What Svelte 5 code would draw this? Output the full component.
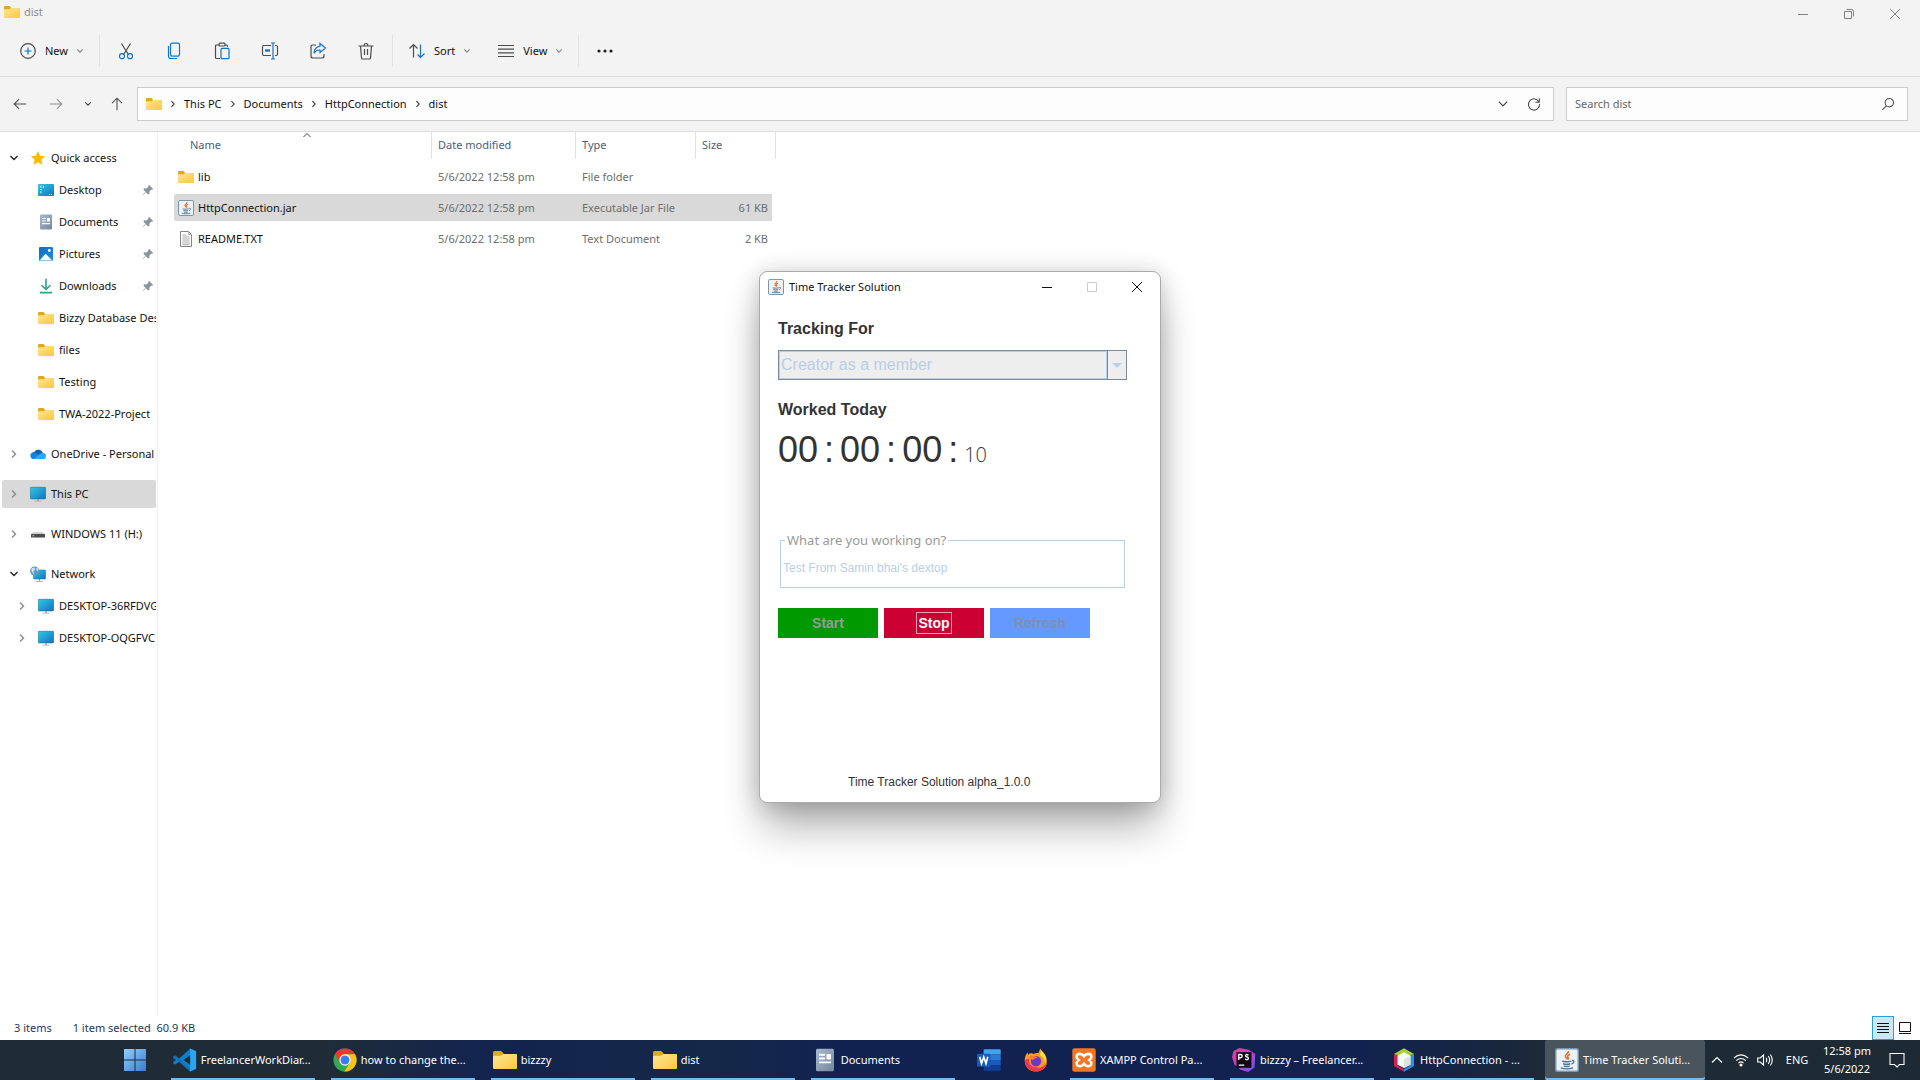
<script>
  const pinned = [
    { icon: 'desktop', label: 'Desktop', pin: true },
    { icon: 'document', label: 'Documents', pin: true },
    { icon: 'pictures', label: 'Pictures', pin: true },
    { icon: 'downloads', label: 'Downloads', pin: true },
    { icon: 'folder', label: 'Bizzy Database Des' },
    { icon: 'folder', label: 'files' },
    { icon: 'folder', label: 'Testing' },
    { icon: 'folder', label: 'TWA-2022-Project' }
  ];
  const groups = [
    { icon: 'star', label: 'Quick access', open: true, children: pinned },
    { icon: 'cloud', label: 'OneDrive - Personal' },
    { icon: 'pc', label: 'This PC', selected: true },
    { icon: 'drive', label: 'WINDOWS 11 (H:)' },
    {
      icon: 'network', label: 'Network', open: true,
      children: [
        { icon: 'pc', label: 'DESKTOP-36RFDVG', expandable: true },
        { icon: 'pc', label: 'DESKTOP-OQGFVC', expandable: true }
      ]
    }
  ];
  const files = [
    { icon: 'folder', name: 'lib', date: '5/6/2022 12:58 pm', type: 'File folder', size: '' },
    { icon: 'java', name: 'HttpConnection.jar', date: '5/6/2022 12:58 pm', type: 'Executable Jar File', size: '61 KB', selected: true },
    { icon: 'text', name: 'README.TXT', date: '5/6/2022 12:58 pm', type: 'Text Document', size: '2 KB' }
  ];
  const tools = ['Cut', 'Copy', 'Paste', 'Rename', 'Share', 'Delete'];
  const crumbs = ['This PC', 'Documents', 'HttpConnection', 'dist'];
  const tasksLeft = [
    { icon: 'vscode', label: 'FreelancerWorkDiar...' },
    { icon: 'chrome', label: 'how to change the...' },
    { icon: 'folder', label: 'bizzzy' },
    { icon: 'folder', label: 'dist' },
    { icon: 'document', label: 'Documents' }
  ];
  const tasksRight = [
    { icon: 'xampp', label: 'XAMPP Control Pa...' },
    { icon: 'storm', label: 'bizzzy – Freelancer...' },
    { icon: 'netbeans', label: 'HttpConnection - ...' }
  ];
</script>

{#snippet chevron(dir, cls = '')}
  <svg class="chev {dir} {cls}" viewBox="0 0 10 10" aria-hidden="true"><path d="M1.5 3 5 6.5 8.5 3" /></svg>
{/snippet}

{#snippet icon(name, size = 16)}
  <svg class="ico" width={size} height={size} viewBox="0 0 16 16" aria-hidden="true">
    {#if name === 'folder'}
      <path d="M0 3q0-1 1-1h4.5l1.8 2H15q1 0 1 1v2H0z" fill="#dfa91b" />
      <path d="M0 6q0-.8.8-.8h4.4L7 4h8.2q.8 0 .8.8v8.4q0 .8-.8.8H.8q-.8 0-.8-.8z" fill="url(#gFolder)" />
    {:else if name === 'star'}
      <path d="m8 1 2.1 4.7 5 .6-3.7 3.4 1 5L8 12.2l-4.4 2.5 1-5L.9 6.3l5-.6z" fill="#ffb900" />
    {:else if name === 'desktop'}
      <rect y="2" width="16" height="12" rx="1" fill="url(#gScreen)" />
      <path d="M2.2 4.2h1.2v1.2H2.2zm0 2.7h1.2v1.2H2.2zm0 2.7h1.2v1.2H2.2zM4.8 4.2H6v1.2H4.8z" fill="#fff" />
      <path d="M11 12.5h1m1 0h1" stroke="#fff" />
    {:else if name === 'document'}
      <rect x="2" y=".5" width="12" height="15" rx="1" fill="url(#gDoc)" />
      <path d="M4 4.5h4M4 7h4M4 9.6h8" stroke="#fff" stroke-width="1.2" />
      <path d="M9 4h3v3.6H9z" fill="#fff" />
    {:else if name === 'pictures'}
      <rect x="1" y="1" width="14" height="14" rx="1.2" fill="url(#gPic)" />
      <path d="m1.6 14.4 5.2-6q.8-.9 1.6 0l5.9 6z" fill="#fff" />
      <circle cx="11.3" cy="4.5" r="1.4" fill="#fff" />
    {:else if name === 'downloads'}
      <path d="M8 .8v10.4M3.6 7.2 8 11.5l4.4-4.3M2 14.6h12" fill="none" stroke="#25a588" stroke-width="1.6" />
    {:else if name === 'cloud'}
      <path d="M4.8 5.4a4.5 4.5 0 0 1 7.7 1.2L15 8.5l-8 4-5-5.3z" fill="#0b5fb4" />
      <path d="M3.4 13a3.4 3.4 0 0 1-.3-6.7c1.6-.4 2.8.2 4 1.1l7 4.6-1.2 1z" fill="#1182d8" />
      <path d="M3.4 13 10 8q1.4-1.4 3.1-1a3 3 0 0 1-.3 6z" fill="#2aa8ef" />
    {:else if name === 'pc'}
      <path d="M7.4 12.5h1.2V15H7.4zM4.8 14.8h6.4v.8H4.8z" fill="#9aa3a8" />
      <rect x=".3" y="1.3" width="15.4" height="11.6" rx=".8" fill="url(#gScreen)" stroke="#187197" stroke-width=".6" />
    {:else if name === 'drive'}
      <path d="M3 6h10l2 2.5H1z" fill="#d0d0d0" />
      <rect x="1" y="8" width="14" height="3.6" rx=".5" fill="#4b4b4b" />
      <path d="M2.6 9.8h1.6" stroke="#ddd" />
    {:else if name === 'network'}
      <path d="M8.8 13h1.2v2H8.8zM6 15h7v.7H6z" fill="#9aa3a8" />
      <rect x="3.6" y="4" width="12" height="9" rx=".6" fill="url(#gScreen)" stroke="#187197" stroke-width=".5" />
      <circle cx="4.6" cy="5" r="4.5" fill="#5a9cc6" />
      <path d="m1.5 2.6 2.7-1 1 2-1.8 1.6L4.5 9l-3-3.8zM6.6 1.4l2 2.1-1.4 2-1-2z" fill="#cfe4ef" />
    {:else if name === 'java'}
      <rect x=".5" y=".5" width="15" height="15" rx="1.4" fill="#edf2f6" stroke="#7897b3" />
      <path d="M8.9 2c.8 1.6-2.6 2.3-1.9 3.8.3.7 1 1 1 1.8M10 4.2C8.5 4.900 8 5.600 8.700 6.400c.4.5.1 1-.2 1.300" fill="none" stroke="#e5742b" stroke-width="1.1" />
      <path d="M4.800 8.800c1 .5 4.700.5 6-.1m-5.400 1.800c1.400.4 3.500.4 4.800 0m-4.400 1.600c1.200.3 2.900.3 4 0M3.800 13.300c2 .6 6.200.6 8.300 0M11.200 8.400c1.900-.5 2 1.500-.2 2.300" fill="none" stroke="#4c7498" stroke-width=".9" />
    {:else if name === 'text'}
      <path d="M2.5.5h8l3 3v12h-11z" fill="#fff" stroke="#858585" />
      <path d="M10.5.5v3h3M4.3 4h4.500m-4.500 2h7.400m-7.400 2h7.400m-7.400 2h7.400m-7.400 2h7.400m-7.400 1.800h7.400" fill="none" stroke="#969696" stroke-width=".8" />
    {:else if name === 'vscode'}
      <path d="m11.4.3 4 1.8v11.800l-4 1.800-7.200-6.600L1.400 11 .2 10.400V5.600L1.400 5l2.800 2z" fill="#0d7fcb" />
      <path d="m1.400 5 10 8.800v1.900L.3 6z" fill="#1b6fb4" />
      <path d="m11.400.3 4 1.800v11.800l-4 1.800z" fill="#2aa5f0" />
      <path d="M11.400 4.800v6.400L7.200 8z" fill="#1c2b36" />
      <path d="M.2 6.600v2.800L2 8z" fill="#1c2b36" />
    {:else if name === 'chrome'}
      <circle cx="8" cy="8" r="7.700" fill="#33a852" />
      <path d="M8 8 1.300 4.200A7.700 7.700 0 0 1 14.700 4.200H8z" fill="#e33b2e" />
      <path d="M8 4.200h6.700A7.700 7.700 0 0 1 7.600 15.700L11.200 9.800z" fill="#fbc116" />
      <path d="M8 4.200a3.800 3.800 0 0 0-3.300 5.700L1.300 4.200A7.700 7.700 0 0 1 3 2.200z" fill="#e33b2e" />
      <circle cx="8" cy="8" r="3.800" fill="#fff" />
      <circle cx="8" cy="8" r="3" fill="#3b7ded" />
    {:else if name === 'word'}
      <path d="M5 .8h10.200q.6 0 .6.6v3H4.400v-3q0-.6.6-.6" fill="#41a5ee" />
      <path d="M4.400 4.400h11.400V8H4.400z" fill="#2b7cd3" />
      <path d="M4.400 8h11.400v3.600H4.400z" fill="#185abd" />
      <path d="M4.400 11.600h11.400v3q0 .6-.6.6H5q-.6 0-.6-.6z" fill="#103f91" />
      <rect y="3.800" width="9" height="8.600" rx=".6" fill="#185abd" />
      <path d="m1.800 5.800 1.200 4.600 1.500-4.400L6 10.400l1.200-4.600" fill="none" stroke="#fff" stroke-width="1.100" />
    {:else if name === 'firefox'}
      <path d="M11 .4c1 2 1.200 2.200 2 2.800 4.200 4.200 2.500 12.400-5 12.500C2.500 15.700.200 11.500.500 7.500.700 5.600 1.500 4 2.400 3l.4 1.500C4 3 5.500 3.300 6.500 4c1.300-.7 2-.9 3-.6.9-1 .6-2 1.500-3" fill="#ff9a21" />
      <path d="M.5 8C.3 13 4 15.700 8 15.700c4.500 0 7-3 7.400-6.200-1.400 2.500-4 4-7 3.500C4.500 12.500 3 10 3.400 7z" fill="#f0384c" />
      <path d="M11.500 1.500c2.700 2.500 3.800 5.500 2.600 8.500-.2-2.500-1.800-4.500-3.600-5.300z" fill="#ffe14a" />
      <circle cx="8" cy="8.800" r="3.500" fill="#6b3bc5" />
      <path d="M3.500 5.800c2.500-1.300 4.500-.2 5.500.700-1.500 0-2.500.700-3 1.700z" fill="#ff7a2e" />
    {:else if name === 'xampp'}
      <rect x=".2" y=".2" width="15.600" height="15.600" rx="1.500" fill="#f37623" />
      <path d="M5.100 3.900q1.900 0 2.900 1.500 1-1.500 2.900-1.500 2 0 2 1.900 0 1.300-1.300 2.200 1.300.9 1.300 2.200 0 1.900-2 1.900-1.900 0-2.900-1.500-1 1.500-2.900 1.500-2 0-2-1.900 0-1.300 1.300-2.200-1.300-.9-1.300-2.200 0-1.900 2-1.900z" fill="none" stroke="#fff" stroke-width="1.700" />
    {:else if name === 'storm'}
      <path d="M1 2 5 0l6 1.200L15.500 4 15 13l-4.200 3-5-1.500L1.600 11 0 6z" fill="url(#gStorm)" />
      <rect x="3" y="2.800" width="10" height="10.400" fill="#100713" />
      <path d="M4.500 8V4.300h1.200q1.100 0 1.100 1.100T5.700 6.500H4.500M11 4.700q-1.800-.8-2 .3 0 .8 1 1t1 1q-.2 1.200-2.200.4M4.500 11.400h3.700" fill="none" stroke="#fff" stroke-width=".9" />
    {:else if name === 'netbeans'}
      <path d="M8 .2 14.700 4 8 7 1.300 4z" fill="#a6ce39" />
      <path d="M1.300 4 4 5.300v6.600L8 14v1.900L1.300 12z" fill="#d81f52" />
      <path d="M14.700 4 12 5.300v6.600L8 14v1.900l6.700-3.900z" fill="#2d8fe0" />
      <path d="m8 2.800 4.300 2.300v6L8 13.400l-4.300-2.300v-6z" fill="#f8f8f4" />
      <path d="M8 7.600 12.300 5v6.100L8 13.400z" fill="#d8e6dd" />
    {/if}
  </svg>
{/snippet}

{#snippet tool(name)}
  <svg class="tool-ico" viewBox="0 0 18 18" aria-hidden="true">
    {#if name === 'New'}
      <circle cx="9" cy="9" r="7.300" /><path class="b" d="M9 5.500v7M5.500 9h7" />
    {:else if name === 'Cut'}
      <path d="m4.500 1.500 7 11.300M13.500 1.500l-7 11.300" /><circle class="b" cx="5" cy="14.200" r="2.500" /><circle class="b" cx="13" cy="14.200" r="2.500" />
    {:else if name === 'Copy'}
      <rect class="b" x="5.500" y="1.200" width="9" height="13" rx="1.600" /><path class="b" d="M3.500 4v10q0 2.500 2.500 2.500h6" />
    {:else if name === 'Paste'}
      <path d="M6 3H3.500q-1 0-1 1v11.500q0 1 1 1H7M12 3h1.500q1 0 1 1v1" /><rect x="6" y="1.200" width="6" height="2.800" rx="1" /><rect class="b" x="8" y="6.300" width="8" height="10.400" rx="1" />
    {:else if name === 'Rename'}
      <path d="M10 3.500H3q-1.500 0-1.500 1.500v7q0 1.500 1.500 1.500h7M14 3.500h1q1.500 0 1.500 1.500v7q0 1.500-1.500 1.500h-1" /><path class="b" d="M12 1v16M10 1h4M10 17h4" /><path class="b thick" d="M4 8.500h5" />
    {:else if name === 'Share'}
      <path d="M7 3H4Q2 3 2 5v9q0 2 2 2h9q2 0 2-2v-2" /><path class="b" d="M11 1.500 16.500 6 11 10.500V8q-4-.3-6 3.200.3-6 6-7z" />
    {:else if name === 'Delete'}
      <path d="M1.500 4h15M3.500 4l1 12q0 1 1 1h7q1 0 1-1l1-12M7 4q0-2.500 2-2.500T11 4M7.500 7v6M10.500 7v6" />
    {:else if name === 'Sort'}
      <path d="M5.500 15.500V2.500M1.500 6.500l4-4 4 4" /><path class="b" d="M12.500 2.500v13M9.500 12.500l3 3 4-4" />
    {:else if name === 'View'}
      <path d="M1 3.500h16M1 7.200h16M1 10.800h16M1 14.500h16" />
    {:else if name === 'back'}
      <path d="M16 9H2.500M8 3.500 2.500 9 8 14.500" />
    {:else if name === 'forward'}
      <path d="M2 9h13.500M10 3.500 15.500 9 10 14.500" />
    {:else if name === 'up'}
      <path d="M9 16V2.500M3.500 8 9 2.500 14.500 8" />
    {:else if name === 'refresh'}
      <path d="M14.800 7A6.300 6.300 0 1 0 15.300 9M15 2.500V7h-4.500" />
    {:else if name === 'search'}
      <circle cx="10.500" cy="7.500" r="4.700" /><path d="m7.200 11-4.700 4.500" />
    {/if}
  </svg>
{/snippet}

{#snippet treeRow(item, child)}
  <button class="tree-row" class:child class:selected={item.selected}>
    <span class="twist" class:open={item.open}>
      {#if item.open}{@render chevron('down')}{:else if !child || item.expandable}{@render chevron('right')}{/if}
    </span>
    {@render icon(item.icon)}
    <span class="tree-label">{item.label}</span>
    {#if item.pin}
      <svg class="pin" viewBox="0 0 12 12" aria-hidden="true"><path d="M7 .8 11.200 5l-1 .8-.8-.3-2 2 .1 2-1.300 1.100-2.400-2.400L1 11l-.4-.3 2.900-3L1.300 5.500l1.200-1.200 2 .1 2-2-.3-.7z" /></svg>
    {/if}
  </button>
{/snippet}

{#snippet task(t)}
  <button class="task">{@render icon(t.icon, 24)}<span>{t.label}</span></button>
{/snippet}

<svg class="defs" width="0" height="0" aria-hidden="true">
  <defs>
    <linearGradient id="gFolder" x1="0" y1="0" x2="1" y2="1"><stop stop-color="#ffe596" /><stop offset="1" stop-color="#fbc93d" /></linearGradient>
    <linearGradient id="gScreen" x1="0" y1="0" x2="1" y2="1"><stop stop-color="#2fcbe0" /><stop offset="1" stop-color="#1470c4" /></linearGradient>
    <linearGradient id="gDoc" x1="0" y1="0" x2="1" y2="1"><stop stop-color="#a9bacb" /><stop offset="1" stop-color="#73879f" /></linearGradient>
    <linearGradient id="gPic" x1="0" y1="0" x2="1" y2="1"><stop stop-color="#0f6cbd" /><stop offset="1" stop-color="#1b8fe6" /></linearGradient>
    <linearGradient id="gStorm" x1="0" y1="0" x2="1" y2="1"><stop stop-color="#ff318c" /><stop offset="1" stop-color="#6b57ff" /></linearGradient>
    <linearGradient id="gWin" x1="0" y1="0" x2="1" y2="1"><stop stop-color="#8fd0fa" /><stop offset="1" stop-color="#3a7bd5" /></linearGradient>
  </defs>
</svg>

<div class="desktop">
  <header class="titlebar">
    <div class="title">{@render icon('folder')}<span>dist</span></div>
    <div class="win-buttons">
      <button aria-label="Minimize"><svg viewBox="0 0 12 12"><path d="M1 6.500h10" /></svg></button>
      <button aria-label="Restore"><svg viewBox="0 0 12 12"><path d="M1.500 3.500h7v7h-7zM3.500 1.500h5q2 0 2 2v5" /></svg></button>
      <button aria-label="Close"><svg viewBox="0 0 12 12"><path d="m1 1 10 10M11 1 1 11" /></svg></button>
    </div>
  </header>

  <div class="toolbar">
    <button class="menu">{@render tool('New')}<span>New</span>{@render chevron('down', 'soft')}</button>
    <i class="sep"></i>
    {#each tools as name}
      <button class="tool" aria-label={name}>{@render tool(name)}</button>
    {/each}
    <i class="sep"></i>
    <button class="menu">{@render tool('Sort')}<span>Sort</span>{@render chevron('down', 'soft')}</button>
    <button class="menu view">{@render tool('View')}<span>View</span>{@render chevron('down', 'soft')}</button>
    <i class="sep"></i>
    <button class="tool" aria-label="See more"><svg class="tool-ico more" viewBox="0 0 18 18"><circle cx="3" cy="9" r="1.600" /><circle cx="9" cy="9" r="1.600" /><circle cx="15" cy="9" r="1.600" /></svg></button>
  </div>

  <div class="navbar">
    <div class="nav-buttons">
      <button aria-label="Back">{@render tool('back')}</button>
      <button class="dim" aria-label="Forward">{@render tool('forward')}</button>
      <button aria-label="Recent locations">{@render chevron('down')}</button>
      <button aria-label="Up">{@render tool('up')}</button>
    </div>
    <nav class="address" aria-label="Address">
      {@render icon('folder')}
      {#each crumbs as c}
        {@render chevron('right')}<a href="#top">{c}</a>
      {/each}
      <span class="grow"></span>
      <button aria-label="Previous locations">{@render chevron('down', 'large')}</button>
      <button aria-label="Refresh list">{@render tool('refresh')}</button>
    </nav>
    <label class="search">
      <input type="text" placeholder="Search dist" aria-label="Search dist" />
      {@render tool('search')}
    </label>
  </div>

  <div class="body">
    <aside class="sidebar">
      {#each groups as g}
        <div class="group">
          {@render treeRow(g, false)}
          {#each g.children ?? [] as c}{@render treeRow(c, true)}{/each}
        </div>
      {/each}
    </aside>
    <main>
      <table>
        <thead>
          <tr>
            <th class="c-name">Name{@render chevron('up', 'sorted')}</th>
            <th class="c-date">Date modified</th>
            <th class="c-type">Type</th>
            <th class="c-size">Size</th>
          </tr>
        </thead>
        <tbody>
          {#each files as f}
            <tr class:selected={f.selected}>
              <td><div class="file">{@render icon(f.icon)}<span>{f.name}</span></div></td>
              <td>{f.date}</td>
              <td>{f.type}</td>
              <td class="size">{f.size}</td>
            </tr>
          {/each}
        </tbody>
      </table>
    </main>
  </div>

  <footer class="status">
    <span>3 items</span><span>1 item selected&nbsp; 60.9 KB</span>
    <span class="grow"></span>
    <button class="on" aria-label="Details view"><svg viewBox="0 0 14 14"><path d="M1 2.500h12M1 5.500h12M1 8.500h12M1 11.500h12" /></svg></button>
    <button aria-label="Large icons view"><svg viewBox="0 0 14 14"><path d="M1.500 1.500h11v9h-11zM1 12.500h12" /></svg></button>
  </footer>

  <div class="taskbar">
    <button class="start-btn" aria-label="Start menu"><svg viewBox="0 0 22 22"><path d="M0 0h10.500v10.500H0zM11.500 0H22v10.500H11.500zM0 11.500h10.500V22H0zM11.500 11.500H22V22H11.500z" fill="url(#gWin)" /></svg></button>
    <div class="tasks">{#each tasksLeft as t}{@render task(t)}{/each}</div>
    <button class="launch" aria-label="Word">{@render icon('word', 24)}</button>
    <button class="launch" aria-label="Firefox">{@render icon('firefox', 24)}</button>
    <div class="tasks right">{#each tasksRight as t}{@render task(t)}{/each}</div>
    <button class="task active">{@render icon('java', 24)}<span>Time Tracker Soluti...</span></button>
    <span class="grow"></span>
    <div class="tray">
      <button aria-label="Show hidden icons"><svg viewBox="0 0 16 16"><path d="m3 10.500 5-5 5 5" /></svg></button>
      <button aria-label="Wi-Fi"><svg viewBox="0 0 16 16"><path d="M.8 6.200q7.200-6.600 14.400 0M3.200 8.600q4.800-4.300 9.600 0M5.500 11q2.500-2.300 5 0" /><circle cx="8" cy="13" r="1" fill="#fff" /></svg></button>
      <button aria-label="Volume"><svg viewBox="0 0 16 16"><path d="M.7 6v4h2.500l3.300 3V3L3.200 6zM9 5.800q1.600 2.200 0 4.400M11.200 4q3 4 0 8M13.300 2.500q4 5.500 0 11" /></svg></button>
      <button class="lang">ENG</button>
      <button class="clock"><span>12:58 pm</span><span>5/6/2022</span></button>
      <button aria-label="Notifications"><svg viewBox="0 0 16 16"><path d="M1 1.500h14v11h-4.500L8 15l-2.500-2.500H1z" /></svg></button>
    </div>
  </div>

  <section class="dialog" aria-label="Time Tracker Solution">
    <header>
      {@render icon('java')}<h1>Time Tracker Solution</h1>
      <button aria-label="Minimize window"><svg viewBox="0 0 12 12"><path d="M1 6.500h10" /></svg></button>
      <button disabled aria-label="Maximize window"><svg viewBox="0 0 12 12"><path d="M1.500 1.500h9v9h-9z" /></svg></button>
      <button aria-label="Close window"><svg viewBox="0 0 12 12"><path d="m1 1 10 10M11 1 1 11" /></svg></button>
    </header>
    <div class="content">
      <label class="heading" for="project">Tracking For</label>
      <div class="combo">
        <select id="project" disabled><option>Creator as a member</option></select>
        <span class="arrow"></span>
      </div>
      <h2 class="heading">Worked Today</h2>
      <div class="timer">
        <span>00</span><span>:</span><span>00</span><span>:</span><span>00</span><span>:</span><span class="sec">10</span>
      </div>
      <fieldset disabled>
        <legend><label for="work">What are you working on?</label></legend>
        <input id="work" type="text" value="Test From Samin bhai's dextop" />
      </fieldset>
      <div class="actions">
        <button class="go" disabled>Start</button>
        <button class="halt"><span>Stop</span></button>
        <button class="again" disabled>Refresh</button>
      </div>
      <p>Time Tracker Solution alpha_1.0.0</p>
    </div>
  </section>
</div>

<style>
  :global(body) { margin: 0; }
  .desktop, .desktop * { box-sizing: border-box; }
  .desktop {
    display: flex; flex-direction: column; position: relative;
    min-height: 100vh; overflow: hidden; background: #fff; color: #111;
    font: 11px/16px "Noto Sans", "Open Sans", sans-serif;
  }
  .defs { position: absolute; }
  button {
    display: flex; align-items: center; justify-content: center; padding: 0;
    border: 0; background: none; color: inherit; font: inherit; white-space: nowrap;
  }
  svg { display: block; flex: none; }
  .grow { flex: 1; }

  .chev { width: 10px; height: 10px; fill: none; stroke: #444; stroke-width: 1.4; }
  .chev.right { transform: rotate(-90deg); }
  .chev.up { transform: rotate(180deg); }
  .chev.soft { width: 8px; height: 8px; stroke: #888; }
  .chev.large { width: 12px; height: 12px; stroke-width: 1; }
  .tool-ico { width: 18px; height: 18px; fill: none; stroke: #4d4d4d; stroke-width: 1.2; }
  .tool-ico .b { stroke: #1374cc; }
  .tool-ico .thick { stroke-width: 2.4; }
  .tool-ico.more { fill: #222; stroke: none; }

  .titlebar { display: flex; justify-content: space-between; height: 26px; background: #f3f3f3; color: #8c8c8c; }
  .title { display: flex; align-items: center; gap: 4px; height: 24px; padding-left: 4px; }
  .win-buttons { display: flex; height: 28px; padding-right: 2px; }
  .win-buttons button { width: 46px; }
  .win-buttons svg { width: 12px; height: 12px; fill: none; stroke: #808080; }

  .toolbar { display: flex; align-items: center; height: 51px; padding-left: 19px; border-bottom: 1px solid #dcdcdc; background: #f3f3f3; }
  .menu { gap: 8px; }
  .view { margin-left: 26px; }
  .sep { width: 1px; height: 32px; margin: 0 15px; background: #e2e2e2; }
  .sep:has(+ .tool) { margin-right: 2px; }
  .tool { width: 48px; height: 32px; }
  .tool + .sep { margin-left: 2px; }
  .tool:last-child { margin-right: auto; }

  .navbar { display: flex; align-items: center; gap: 12px; height: 55px; padding: 0 12px; border-bottom: 1px solid #dcdcdc; background: #f3f3f3; }
  .nav-buttons { display: flex; gap: 16px; width: 113px; }
  .nav-buttons button { width: 16px; }
  .nav-buttons .chev { width: 8px; height: 8px; }
  .nav-buttons .tool-ico { width: 16px; height: 16px; }
  .dim { margin-left: 4px; opacity: .6; }
  .nav-buttons button:last-child { margin-left: -3px; }
  .address, .search { display: flex; align-items: center; height: 34px; border: 1px solid #ccc; background: #fdfdfd; }
  .address { flex: 1; gap: 7px; min-width: 0; padding: 0 7px 0 8px; }
  .address .chev { width: 8px; height: 8px; }
  .address .chev.large { width: 12px; height: 12px; }
  .address a { color: #111; text-decoration: none; }
  .address button { width: 24px; }
  .address .tool-ico, .search .tool-ico { width: 16px; height: 16px; }
  .search { width: 342px; padding: 0 11px 0 8px; }
  .search input { flex: 1; min-width: 0; padding: 0; border: 0; outline: 0; background: none; font: inherit; }
  .search input::placeholder { color: #666; opacity: 1; }

  .body { display: flex; flex: 1; }
  .sidebar { display: flex; flex-direction: column; gap: 12px; width: 158px; padding: 12px 1px 0 2px; border-right: 1px solid #f0f0f0; }
  .group { display: flex; flex-direction: column; gap: 4px; }
  .tree-row { justify-content: flex-start; width: 154px; height: 28px; padding-left: 7px; border-radius: 2px; overflow: hidden; }
  .tree-row.child { padding-left: 15px; }
  .tree-row.selected { background: #d9d9d9; }
  .twist { flex: none; width: 21px; }
  .twist .chev { stroke: #8a8a8a; }
  .twist.open .chev { stroke: #222; }
  .tree-label { flex: 1; margin-left: 5px; overflow: hidden; text-align: left; }
  .pin { width: 12px; height: 12px; margin-right: 2px; fill: #8b959c; }

  main { flex: 1; padding-left: 16px; }
  table { margin-top: -4px; border-collapse: separate; border-spacing: 0 4px; table-layout: fixed; width: 602px; }
  th { position: relative; height: 27px; padding: 0 0 2px 6px; border-right: 1px solid #e2e2e2; color: #4c607a; font-weight: 400; text-align: left; }
  .c-name { width: 258px; padding-left: 16px; }
  .c-date { width: 144px; }
  .c-type { width: 120px; }
  .sorted { position: absolute; top: -2px; left: calc(50% - 1px); stroke-width: 1; }
  td { height: 27px; padding: 0 0 0 6px; color: #6d6d6d; }
  td:first-child { padding-left: 4px; color: #111; border-radius: 2px 0 0 2px; }
  .file { display: flex; align-items: center; gap: 4px; }
  .size { padding-right: 4px; border-right: 4px solid transparent; background-clip: padding-box; text-align: right; }
  tr.selected td { background-color: #d9d9d9; }

  .status { display: flex; align-items: center; height: 24px; padding: 0 4px 0 14px; color: #1e395b; }
  .status span + span:not(.grow) { margin-left: 21px; }
  .status button { width: 22px; height: 24px; }
  .status .on { border: 1px solid #26a0da; background: #cbe8f6; }
  .status svg { width: 14px; height: 14px; fill: none; stroke: #111; }

  .taskbar {
    display: flex; align-items: center; height: 40px; padding-right: 11px; color: #fff;
    background: linear-gradient(90deg, #1f2b35 0, #1f2c38 17%, #13244f 25%, #13244c 27%, #152848 37%, #112251 44%, #112251 70%, #152543 76%, #1f2b35 82%, #1d2a33 100%);
  }
  .start-btn { width: 48px; height: 40px; margin-left: 111px; }
  .start-btn svg { width: 22px; height: 22px; }
  .tasks { display: flex; gap: 16px; margin-left: 12px; }
  .task { flex: none; justify-content: flex-start; gap: 4px; width: 144px; height: 40px; padding-left: 2px; box-shadow: inset 0 -2px #76b9ed; }
  .launch { width: 48px; height: 40px; }
  .tasks + .launch { margin-left: 10px; }
  .tasks.right { margin-left: 10px; }
  .active { width: 160px; margin-left: 11px; padding-left: 10px; border-radius: 2px; background: #4a545d; }
  .tray { display: flex; height: 40px; }
  .tray svg { width: 16px; height: 16px; fill: none; stroke: #fff; stroke-width: 1.1; }
  .tray button { width: 24px; }
  .tray .lang { width: 40px; }
  .tray .clock { flex-direction: column; gap: 2px; width: 60px; margin-right: 8px; }

  .dialog {
    position: absolute; top: 271px; left: calc(50% - 201px); width: 402px; padding-bottom: 12px;
    border: 1px solid #aaa; border-radius: 8px; background: #fff; color: #333;
    box-shadow: 0 28px 40px -4px rgb(0 0 0 / .3), 0 2px 24px rgb(0 0 0 / .2);
  }
  .dialog header { display: flex; align-items: center; height: 29px; padding-left: 8px; }
  .dialog h1 { flex: 1; margin: 0 0 0 5px; color: #111; font: inherit; }
  .dialog header button { width: 45px; }
  .dialog header button:last-child { margin-right: 1px; }
  .dialog header svg:not(.ico) { width: 12px; height: 12px; fill: none; stroke: #111; }
  .dialog header button:disabled svg { stroke: #ccc; }
  .content { display: flex; flex-direction: column; padding: 18px 33px 0 18px; font-family: "Liberation Sans", Arial, sans-serif; }
  .heading { margin: 0; font: bold 16px/20px "Liberation Sans", Arial, sans-serif; }
  .combo { display: flex; height: 30px; margin: 11px 0 20px; border: 1px solid #7a8a99; background: #eee; }
  select {
    flex: 1; padding: 0 1px; border: 1px solid #b8cfe5; border-radius: 0; appearance: none;
    background: #eee; color: #b8cfe5; opacity: 1; font: 16px/20px "Liberation Sans", Arial, sans-serif;
  }
  .arrow { display: flex; align-items: center; justify-content: center; width: 19px; border-left: 1px solid #7a8a99; }
  .arrow::before { content: ""; border: 5px solid transparent; border-top-color: #b8cfe5; border-bottom: 0; }
  .timer { display: flex; align-items: baseline; gap: 6px; height: 64px; margin-top: 8px; font-size: 36px; line-height: 44px; }
  .sec { font: 300 20px/44px "Open Sans", "Noto Sans", sans-serif; }
  fieldset { min-width: 0; height: 57px; margin: 39px 2px 20px; padding: 0 2px; border: 1px solid #b8cfe5; }
  .actions { display: flex; gap: 6px; }
  .actions button { width: 100px; height: 30px; font: bold 14px/20px "Liberation Sans", Arial, sans-serif; color: #999; }
  .actions .go { background: #090; }
  .actions .halt { background: #c03; color: #fff; }
  .halt span { padding: 0 1px; border: 1px solid #e8a0b4; }
  .actions .again { background: #69f; color: #7f8fb0; }
  legend { padding: 0 2px; margin-left: 2px; color: #999; font: 13px/18px "Noto Sans", "Open Sans", sans-serif; }
  fieldset input { display: block; width: 100%; height: 20px; margin-top: 9px; padding: 0; border: 0; background: none; color: #b8cfe5; font: 12px/20px "Liberation Sans", Arial, sans-serif; }
  .dialog p { margin: 136px 0 0 70px; font-size: 12px; line-height: 16px; }
</style>
